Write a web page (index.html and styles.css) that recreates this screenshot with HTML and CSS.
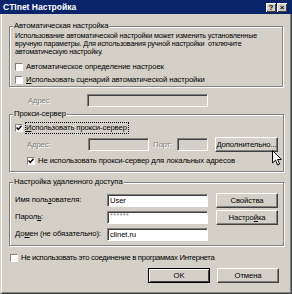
FILE: index.html
```html
<!DOCTYPE html>
<html lang="ru">
<head>
  <meta charset="UTF-8">
  <title>CTInet Настройка</title>
  <link rel="stylesheet" href="styles.css">
</head>
<body>
  <div class="window">
    <div class="titlebar">
      <span class="title">CTInet Настройка</span>
      <div class="title-buttons">
        <span class="tbtn">?</span>
        <span class="tbtn">×</span>
      </div>
    </div>

    <div class="content">
      <!-- automatic configuration -->
      <fieldset class="group group-auto">
        <legend>Автоматическая настройка</legend>
        <p class="note">Использование автоматической настройки может изменить установленные вручную параметры. Для использования ручной настройки &nbsp;отключите автоматическую настройку.</p>
        <label class="check check-first"><span class="box"></span>Автоматическое определение настроек</label>
        <label class="check check-next"><span class="box"></span><u>И</u>спользовать сценарий автоматической настройки</label>
      </fieldset>

      <div class="field-row addr-row">
        <span class="label disabled addr-label">Адрес</span>
        <span class="field disabled addr-field"></span>
      </div>

      <!-- proxy -->
      <fieldset class="group group-proxy">
        <legend>Прокси-сервер</legend>
        <label class="check check-proxy">
          <span class="box"><svg width="6" height="6" viewBox="0 0 6 6"><path d="M0.5 2.5 L2.3 4.5 L5.5 0.8" fill="none" stroke="#000" stroke-width="1.4"/></svg></span>
          <span class="focus"><u>И</u>спользовать прокси-сервер</span>
        </label>
        <div class="proxy-row">
          <span class="label disabled proxy-label">Адрес:</span>
          <span class="field disabled proxy-field"></span>
          <span class="label disabled port-label">Порт:</span>
          <span class="field disabled port-field"></span>
          <button class="btn more-btn">Дополнительно...</button>
        </div>
        <label class="check check-local">
          <span class="box"><svg width="6" height="6" viewBox="0 0 6 6"><path d="M0.5 2.5 L2.3 4.5 L5.5 0.8" fill="none" stroke="#000" stroke-width="1.4"/></svg></span>
          Не использовать прокси-сервер для локальных адресов
        </label>
      </fieldset>

      <!-- dial-up -->
      <fieldset class="group group-dial">
        <legend>Настройка удаленного доступа</legend>
        <div class="dial-grid">
          <span class="label">Имя поль<u>з</u>ователя:</span>
          <span class="field">User</span>
          <button class="btn">Свойства</button>

          <span class="label">Парол<u>ь</u>:</span>
          <span class="field password">******</span>
          <button class="btn">Настро<u>й</u>ка</button>

          <span class="label">До<u>м</u>ен (не обязательно):</span>
          <span class="field">clinet.ru</span>
        </div>
      </fieldset>

      <label class="check check-bottom"><span class="box"></span>Не использовать это соединение в программах Интернета</label>

      <div class="actions">
        <button class="btn default">OK</button>
        <button class="btn">Отмена</button>
      </div>
    </div>

    <svg class="cursor" width="11" height="17" viewBox="0 0 11 17">
      <path d="M0.5 0.5 L0.5 13 L3.5 10.2 L5.6 15 L7.6 14.1 L5.6 9.5 L9.5 9.5 Z" fill="#fff" stroke="#000" stroke-width="1"/>
    </svg>
  </div>
</body>
</html>
```

FILE: styles.css
```css
* {
  box-sizing: border-box;
  margin: 0;
  padding: 0;
}

body {
  font-family: "Liberation Sans", Arial, sans-serif;
  font-size: 7.7px;
  letter-spacing: -0.1px;
  line-height: 10px;
  color: #000;
  background: #d4d0c8;
  width: 292px;
  height: 294px;
  overflow: hidden;
}

.window {
  position: relative;
  width: 292px;
  height: 294px;
  display: flex;
  flex-direction: column;
}

/* title bar */
.titlebar {
  height: 14px;
  background: #0a246a;
  color: #fff;
  display: flex;
  align-items: center;
  justify-content: space-between;
  padding: 0 5px 0 3px;
}

.title {
  font-weight: bold;
  font-size: 8.5px;
  letter-spacing: 0;
}

.title-buttons {
  display: flex;
  gap: 1px;
}

.tbtn {
  width: 10px;
  height: 9px;
  background: #d4d0c8;
  color: #000;
  font-weight: bold;
  font-size: 8px;
  line-height: 9px;
  text-align: center;
  box-shadow: inset 1px 1px #fff, inset -1px -1px #404040;
}

/* body of the dialog */
.content {
  flex: 1;
  border: 1px solid;
  border-color: transparent #404040 #404040 #d4d0c8;
  border-top: none;
  box-shadow: inset 1px 0 #fff, inset -1px -1px #808080;
  padding: 0 8px;
}

.group {
  border: 1px solid #808080;
  box-shadow: inset 1px 1px #fff, 1px 1px #fff;
  padding: 0 5px;
}

.group legend {
  background: #d4d0c8;
  padding: 0 1px;
  margin-left: -2px;
  line-height: 10px;
}

.group-auto {
  margin-top: 7px;
  padding-top: 1px;
  padding-bottom: 1px;
}

.note {
  font-size: 7.2px;
  line-height: 8px;
  width: 248px;
  letter-spacing: -0.15px;
}

.check {
  display: flex;
  align-items: center;
  height: 10px;
  white-space: nowrap;
}

.box {
  width: 8px;
  height: 8px;
  margin-right: 3px;
  background: #fff;
  border: 1px solid;
  border-color: #808080 #fff #fff #808080;
  display: flex;
  align-items: center;
  justify-content: center;
}

.check-first {
  margin-top: 6px;
}

.check-next {
  margin-top: 3px;
}

.label {
  white-space: nowrap;
}

.disabled.label {
  color: #808080;
  text-shadow: 1px 1px #fff;
}

.field {
  height: 13px;
  background: #fff;
  border: 1px solid;
  border-color: #808080 #fff #fff #808080;
  box-shadow: inset 1px 1px #404040;
  padding: 0 2px;
  line-height: 11px;
  white-space: nowrap;
  overflow: hidden;
}

.field.disabled {
  background: #d4d0c8;
}

.field-row {
  display: flex;
  align-items: center;
  height: 13px;
}

.addr-row {
  margin-top: 7px;
  padding-left: 19px;
}

.addr-label {
  width: 59px;
}

.addr-field {
  width: 121px;
}

/* proxy group */
.group-proxy {
  margin-top: 2px;
  padding-top: 4px;
  padding-bottom: 5px;
}

.focus {
  outline: 1px dotted #000;
  outline-offset: 0;
  padding-right: 1px;
}

.proxy-row {
  display: flex;
  align-items: center;
  height: 15px;
  margin-top: 4px;
  padding-left: 12px;
}

.proxy-label {
  width: 61px;
}

.proxy-field {
  width: 61px;
}

.port-label {
  width: 24px;
  margin-left: 4px;
}

.port-field {
  width: 31px;
}

.more-btn {
  width: 63px;
  margin-left: 7px;
  letter-spacing: -0.25px;
}

.check-local {
  margin-top: 4px;
  margin-left: 12px;
}

/* dial-up group */
.group-dial {
  margin-top: 5px;
  padding-top: 5px;
  padding-bottom: 3px;
}

.dial-grid {
  display: grid;
  grid-template-columns: 92px 101px auto;
  grid-auto-rows: 16px;
  row-gap: 1px;
  align-items: center;
}

.dial-grid .btn {
  width: 62px;
  margin-left: 8px;
}

.password {
  color: #808080;
  font-size: 7px;
  line-height: 8px;
  letter-spacing: 0.5px;
}

.check-bottom {
  margin-top: 7px;
  margin-left: 1px;
  letter-spacing: -0.3px;
}

/* buttons */
.btn {
  height: 15px;
  padding: 0;
  background: #d4d0c8;
  font-family: inherit;
  font-size: inherit;
  letter-spacing: inherit;
  line-height: 13px;
  color: #000;
  border: 1px solid;
  border-color: #fff #404040 #404040 #fff;
  box-shadow: inset -1px -1px #808080;
  white-space: nowrap;
}

.btn.default {
  border-color: #000;
  box-shadow: inset 1px 1px #fff, inset -1px -1px #404040;
}

.actions {
  display: flex;
  justify-content: flex-end;
  gap: 7px;
  margin-top: 5px;
  padding-right: 4px;
}

.actions .btn {
  width: 62px;
}

/* mouse pointer over the dialog */
.cursor {
  position: absolute;
  left: 272px;
  top: 150px;
}
```
